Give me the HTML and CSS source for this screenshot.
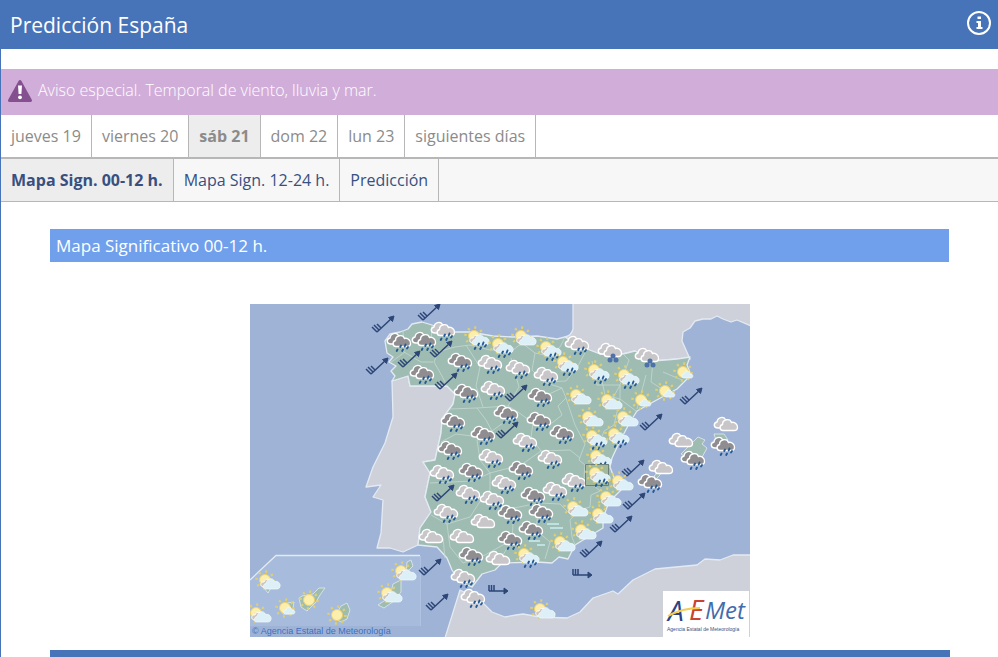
FILE: index.html
```html
<!DOCTYPE html>
<html lang="es">
<head>
<meta charset="utf-8">
<title>Predicción España</title>
<link rel="stylesheet" href="styles.css">
</head>
<body>
<div class="page">
  <header class="topbar">
    <h1>Predicción España</h1>
    <button class="info" type="button" aria-label="Información">
      <svg width="26" height="26" viewBox="0 0 26 26"><circle cx="13" cy="13" r="11" fill="none" stroke="#fff" stroke-width="2"/><path d="M11.500 6.500h3.500v2.500h-3.500zM10.500 11h4.500v6h1.500v2h-6v-2h1.500v-4h-1.500z" fill="#fff"/></svg>
    </button>
  </header>

  <a class="alert" href="#aviso">
    <svg width="26" height="24" viewBox="0 0 26 24"><path d="M13 2.500L23.500 21.500H2.500Z" fill="#84508f" stroke="#84508f" stroke-width="3" stroke-linejoin="round"/><path d="M11 6.500h4l-.6 8.500h-2.800z" fill="#fff"/><circle cx="13" cy="18.300" r="1.900" fill="#fff"/></svg>
    <span>Aviso especial. Temporal de viento, lluvia y mar.</span>
  </a>

  <nav class="tabs days" aria-label="Días">
    <a href="#j19">jueves 19</a><a href="#v20">viernes 20</a><a class="active" href="#s21">sáb 21</a><a href="#d22">dom 22</a><a href="#l23">lun 23</a><a href="#sig">siguientes días</a>
  </nav>
  <nav class="tabs views" aria-label="Vistas">
    <a class="active" href="#m00">Mapa Sign. 00-12 h.</a><a href="#m12">Mapa Sign. 12-24 h.</a><a href="#pred">Predicción</a>
  </nav>

  <main class="content">
    <h2>Mapa Significativo 00-12 h.</h2>
    <svg class="map" viewBox="250 304 500 333" role="img" aria-label="Mapa significativo">
      <defs>
        <g id="back"><path d="M-8 4C-12.500 4-13-1-9-2C-8.500-7-2.500-8-.5-4.500C4-4 4 4 0 4Z"/></g>
        <g id="front"><path d="M-3 6.500C-6.500 6.500-7 1.500-3.500 .5C-3.500-5 4-6 5.500-1.500C9-2.500 12 1 11.500 3.500C11.500 6 9.500 6.500 8 6.500Z"/></g>
        <g id="drops" stroke="#255a96" stroke-width="1.900" stroke-linecap="round"><path d="M2 5.500L1.200 7M6.500 4.500L5.700 6.500M9 7L8 8.500M-1.500 9.500L-2.300 11M4 9.500L3.200 11"/></g>
        <g id="c" stroke="#fff" stroke-width="1.400" fill="#c8c6c9"><use href="#back"/><use href="#front"/></g>
        <g id="d" stroke="#fff" stroke-width="1.400" fill="#8f8d90"><use href="#back"/><use href="#front"/></g>
        <g id="g"><use href="#c"/><use href="#drops"/></g>
        <g id="r"><use href="#d"/><use href="#drops"/></g>
        <g id="n"><use href="#c"/><g fill="#4e71a9"><circle cx="3" cy="6" r="2.500"/><circle cx="0" cy="10" r="2.500"/><circle cx="6" cy="10" r="2.500"/></g></g>
        <g id="sun"><circle r="8.500" fill="none" stroke="#dfcf70" stroke-width="2.600" stroke-dasharray="2 4.670"/><circle r="5.500" fill="#fcefad" stroke="#f0d267"/></g>
        <g id="p"><use href="#sun" x="-3" y="-2"/><path d="M-5 5C-9 4-7-1-4 0C-3-4 3-3 3 0V5Z" fill="#cfc3bb" stroke="#fff"/><path d="M-2 7C-6 7-5 1.500-2 1.500C-1-4 5-5 6.500-.5C10-1.500 13 2 12 4.500C11.500 7 9.500 7 8 7Z" fill="#def0f7" stroke="#f1fafc" stroke-width=".7"/></g>
        <g id="q"><use href="#p"/><use href="#drops"/></g>
        <g id="s"><use href="#sun"/><path d="M1 6C-2 6-2 2 1 2C2-2 6-2 7 2C10 1 11 6 8 6Z" fill="#def0f7" stroke="#f1fafc" stroke-width=".7"/></g>
        <g id="w" fill="none" stroke="#2d4675" stroke-width="1.500"><path d="M-6 8L9-6M-6 8L-11 3M-4 6L-9 1M-2 4L-6 0"/><path d="M11-8L9.500-2.500L5.500-6.500Z" fill="#2d4675" stroke-width="1"/></g>
        <g id="h" fill="none" stroke="#2d4675" stroke-width="1.500"><path d="M-9 1H7M-9 1V-5M-6.500 1V-5M-4 1V-5"/><path d="M10 1L6-2V4Z" fill="#2d4675" stroke-width="1"/></g>
      </defs>

      <path fill="#9fb3d7" d="M250 304H750V637H250Z"/>
      <g stroke="#e3eaf2" stroke-width="1.300" stroke-linejoin="round">
        <path fill="#ced1da" d="M573 303V329C572 334 569 336 565 337L587 349L600 354L623 354L635 351L653 361L677 359L690 359L682 341L683 332L690 328L695 321L703 319L711 319L717 316L723 319L731 322L737 320L751 326V303Z"/>
        <path fill="#ced1da" d="M392 381L408 376L410 386L447 386L455 394L453 404L442 419L441 433L435 460L423 462L430 473L425 497L431 512L420 528L418 545L403 552L390 548L377 548L381 533L383 500L373 497L381 485L366 487L373 467L385 443L393 417Z"/>
        <path fill="#9ebcb2" d="M385 341L390 334L400 332L408 329L412 324L422 322L432 325L453 332L470 332L493 336L513 337L537 336L557 339L565 337L575 344L587 349L600 354L623 354L635 351L653 361L677 359L690 357L687 365L691 375L677 389L653 402L637 411L630 422L620 441L612 458L610 467L615 480L624 487L609 502L603 518L603 528L588 537L575 545L568 559L559 557L552 563L537 562L502 563L495 570L482 574L472 587L460 582L452 570L447 558L437 547L418 545L420 528L431 512L425 497L430 473L423 462L435 460L441 433L442 419L453 404L455 394L447 386L410 386L408 376L392 381L395 376L391 371L396 366L389 362L393 357L387 353Z"/>
        <path fill="#ced1da" d="M445 638L460 590L472 596L483 603L492 612L505 617L516 615L523 614L540 617L567 618L580 612L593 598L613 591L618 594L633 580L655 569L697 565L705 559L720 560L733 555H751V638Z"/>
        <path fill="#9ebcb2" stroke-width=".8" d="M681 454L698 437L705 440L702 444L707 448L700 461L693 461L686 457ZM714 434L724 434L728 440L716 440ZM654 476L660 471L660 475L656 479Z"/>
      </g>
      <g fill="none" stroke="#c5d8d2" stroke-width=".8" stroke-linejoin="round">
        <path d="M432 325L431 342L438 352L434 362L442 376L447 386M437 352L455 347L470 345L490 350L513 350L522 343L535 353L549 356L560 347L565 337M535 353L532 370L544 382L566 381L578 366L587 349M543 382L562 388L566 398L558 406L562 415L552 423L533 423L518 412L492 431L472 436L456 434L441 442M562 388L545 396M566 398L575 425L585 444L579 460L585 465L584 477L600 491L591 495L590 507L579 510L570 520L572 537L575 545M600 372L605 395L620 399L636 411M623 354L629 360L620 385L620 399M653 361L651 382L662 389M620 399L614 425L604 431L597 450M450 409L477 408L486 420L492 431M483 407L476 386L480 367L466 345M477 408L508 406L519 387L511 358M508 406L518 412M533 423L531 437L541 451L570 450L580 458M541 451L521 465L490 473L480 460L477 440M490 473L490 490L481 500L470 517L447 524L431 515M490 473L473 481L430 483M481 500L514 508L539 503L560 504L571 515M539 503L536 530L550 542L545 559M514 508L512 540L500 560M447 524L450 547L463 563L485 555L510 541M443 538L445 558M592 361L597 385L620 385M403 330L404 352L421 362L433 362M390 363L405 352M620 385L612 400M646 375L637 409M663 372L682 380"/>
      </g>

      <path d="M250 580L276 556H421V626H250Z" fill="#a7bbdc"/>
      <path d="M250 580L276 555.500H420" fill="none" stroke="#e3eaf2" stroke-width="1.300"/>
      <path d="M420.500 556V626" stroke="#afc2e2"/>
      <g fill="#9ebcb2" stroke="#d4e2e5" stroke-width="1">
        <path d="M299 598L302 596L313 594L319 588L325 588L320 595L316 602L307 611L301 607ZM341 606L347 603L350 610L347 619L341 622L334 618ZM407 562L411 560L413 566L406 573ZM393 584L401 580L401 592L394 601L384 608L378 605L390 597ZM264 588L272 586L268 593ZM287 603L294 602L292 614L283 614ZM254 615L264 614L258 621Z"/>
      </g>
      <g fill="none" stroke="#c9edf1" stroke-width="1.600"><path d="M547 524H559M550 528H563M529 541H540M537 545H545"/></g>

      <use href="#w" x="383" y="324"/><use href="#w" x="429" y="312"/><use href="#w" x="377" y="366"/><use href="#w" x="409" y="359"/><use href="#w" x="441" y="349"/><use href="#w" x="446" y="381"/><use href="#w" x="516" y="393"/><use href="#w" x="507" y="430"/><use href="#w" x="443" y="493"/><use href="#w" x="691" y="396"/><use href="#w" x="651" y="422"/><use href="#w" x="633" y="468"/><use href="#w" x="634" y="501"/><use href="#w" x="621" y="524"/><use href="#w" x="591" y="549"/><use href="#w" x="430" y="567"/><use href="#w" x="437" y="602"/><use href="#h" x="498" y="590"/><use href="#h" x="582" y="574"/>

      <use href="#r" x="399" y="340"/><use href="#r" x="424" y="339"/><use href="#g" x="443" y="329"/><use href="#r" x="460" y="360"/><use href="#r" x="422" y="372"/><use href="#r" x="466" y="391"/><use href="#g" x="490" y="362"/><use href="#g" x="518" y="367"/><use href="#g" x="493" y="388"/><use href="#r" x="540" y="395"/><use href="#g" x="546" y="374"/><use href="#g" x="577" y="343"/>
      <use href="#q" x="477" y="338"/><use href="#q" x="501" y="346"/><use href="#p" x="524" y="338"/><use href="#q" x="549" y="349"/><use href="#q" x="566" y="364"/><use href="#n" x="610" y="350"/><use href="#n" x="647" y="355"/><use href="#q" x="597" y="372"/><use href="#q" x="627" y="377"/>
      <use href="#s" x="683" y="372"/><use href="#s" x="665" y="391"/><use href="#s" x="641" y="400"/><use href="#p" x="579" y="397"/><use href="#p" x="610" y="402"/><use href="#p" x="591" y="419"/><use href="#p" x="626" y="419"/><use href="#q" x="595" y="438"/><use href="#q" x="617" y="436"/>
      <use href="#r" x="506" y="412"/><use href="#r" x="453" y="420"/><use href="#r" x="539" y="419"/><use href="#r" x="562" y="432"/><use href="#r" x="483" y="433"/><use href="#r" x="450" y="448"/><use href="#g" x="525" y="440"/><use href="#g" x="491" y="456"/><use href="#g" x="550" y="457"/><use href="#g" x="442" y="472"/><use href="#r" x="471" y="470"/><use href="#r" x="521" y="468"/><use href="#g" x="504" y="482"/><use href="#g" x="468" y="492"/><use href="#g" x="492" y="498"/><use href="#g" x="574" y="480"/><use href="#g" x="555" y="489"/><use href="#r" x="533" y="494"/><use href="#r" x="541" y="511"/><use href="#r" x="510" y="512"/><use href="#g" x="446" y="511"/><use href="#c" x="483" y="521"/><use href="#r" x="531" y="528"/><use href="#r" x="510" y="538"/><use href="#c" x="431" y="536"/><use href="#c" x="462" y="536"/><use href="#r" x="471" y="554"/><use href="#c" x="498" y="558"/><use href="#g" x="463" y="576"/><use href="#g" x="473" y="596"/>
      <use href="#q" x="599" y="458"/><path d="M585.500 464.500H608.500V485.500H585.500Z" fill="#a3b99b" stroke="#6c8278"/><use href="#q" x="598" y="475"/><use href="#p" x="621" y="483"/><use href="#p" x="609" y="499"/><use href="#p" x="576" y="509"/><use href="#p" x="601" y="516"/><use href="#p" x="584" y="532"/><use href="#p" x="563" y="544"/><use href="#q" x="527" y="556"/><use href="#p" x="543" y="611"/>
      <use href="#c" x="726" y="424"/><use href="#r" x="723" y="444"/><use href="#c" x="681" y="440"/><use href="#r" x="693" y="458"/><use href="#c" x="661" y="467"/><use href="#r" x="650" y="481"/>
      <use href="#p" x="268" y="582"/><use href="#p" x="259" y="615"/><use href="#s" x="285" y="608"/><use href="#sun" x="309" y="600"/><use href="#sun" x="337" y="615"/><use href="#p" x="404" y="573"/><use href="#p" x="390" y="595"/>

      <text class="credit" x="252" y="634">© Agencia Estatal de Meteorología</text>
      <path fill="#fff" d="M663 591H749V637H663Z"/>
      <g class="logo">
        <text x="668" y="621" fill="#2a4384">A</text><text x="689" y="620" fill="#c84334">E</text><text class="met" x="705" y="619" fill="#416dad">Met</text>
      </g>
      <path d="M668 616Q682 608 700 608" fill="none" stroke="#f2ce52" stroke-width="2"/>
      <text class="tagline" x="667" y="631">Agencia Estatal de Meteorología</text>
    </svg>
  </main>
  <div class="section-bar"></div>
</div>
</body>
</html>
```
FILE: styles.css
```css
* { box-sizing: border-box; }
body { margin: 0; background: #fff; font-family: "Open Sans", "Noto Sans", sans-serif; font-size: 16px; }
.page { min-height: 100vh; border-left: 1px solid #4774b9; }
h1, h2 { margin: 0; font-weight: 400; color: #fff; }
a { color: inherit; text-decoration: none; }
.topbar { display: flex; align-items: center; justify-content: space-between; height: 49px; margin-left: -1px; padding: 0 6px 0 10px; background: #4774b9; }
h1 { font-size: 21px; line-height: 28px; }
.info { display: flex; padding: 0 0 3px; border: 0; background: none; }
.alert { display: flex; gap: 5px; height: 46px; margin-top: 20px; padding: 10px 6px; background: #d1aeda; color: #fff; font-weight: 300; line-height: 22px; }
.tabs { display: flex; line-height: 42px; }
.tabs a { padding: 0 10px; border-right: 1px solid #b7b7b7; }
.days { border-bottom: 2px solid #b7b7b7; color: #8b8b8b; }
.tabs .active { background: #ededed; font-weight: 700; }
.views { border-bottom: 1px solid #b7b7b7; background: #f7f7f7; color: #385080; }
.content { padding: 27px 49px 13px; }
h2 { padding: 0 6px; background: #70a0ec; font-size: 17px; line-height: 33px; }
.map { display: block; width: 500px; max-width: 100%; margin: 42px auto 0; }
.section-bar { height: 7px; margin: 0 48px 0 49px; background: #4774b9; }
.credit { font: 9px "Liberation Sans", sans-serif; fill: #3d70bf; }
.logo { font: italic 28px "Open Sans", sans-serif; }
.logo .met { font-size: 24px; }
.tagline { font: 5px "Liberation Sans", sans-serif; fill: #3a4f84; }
```
